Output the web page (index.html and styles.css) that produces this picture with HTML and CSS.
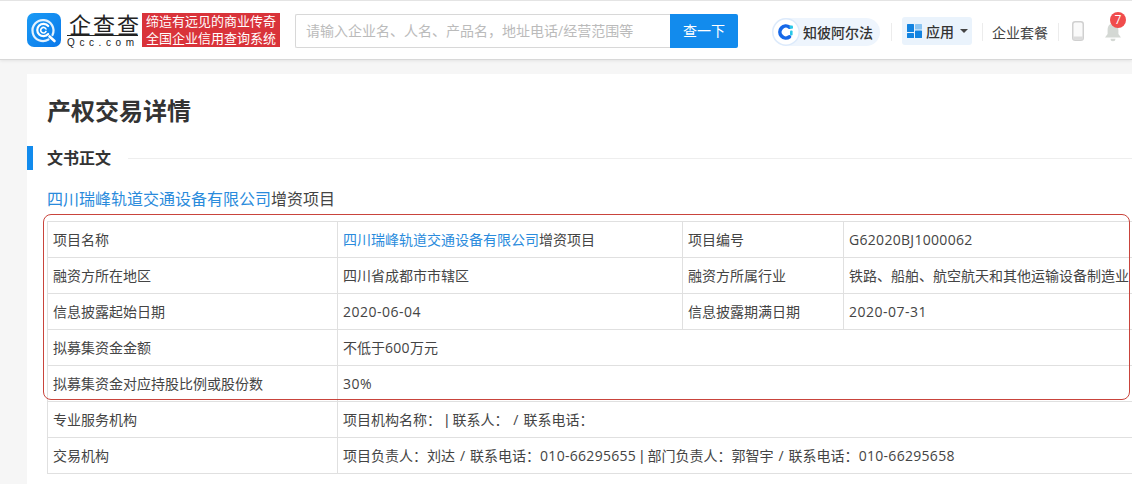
FILE: index.html
```html
<!DOCTYPE html>
<html lang="zh">
<head>
<meta charset="utf-8">
<title>产权交易详情</title>
<link rel="stylesheet" href="styles.css">
</head>
<body>
<header class="header">
  <a class="logo-mark">
    <svg width="34" height="34" viewBox="0 0 34 34">
      <defs><linearGradient id="lg" x1="0" y1="0" x2="1" y2="1"><stop offset="0" stop-color="#1a9bf5"/><stop offset="1" stop-color="#0a78ea"/></linearGradient></defs>
      <rect width="34" height="34" rx="7" fill="url(#lg)"/>
      <path d="M25.5 22 A10.5 10.5 0 1 0 21.5 26.5" fill="none" stroke="#e4f2fe" stroke-width="2.2" stroke-linecap="round"/>
      <path d="M21.2 13 A6.2 6.2 0 1 0 21.2 21" fill="none" stroke="#fff" stroke-width="2.2" stroke-linecap="round"/>
      <path d="M19 16 A2.8 2.8 0 1 0 19 18.4" fill="none" stroke="#fff" stroke-width="1.6" stroke-linecap="round"/>
      <path d="M22.5 23.5 L27.5 28" stroke="#fff" stroke-width="2.6" stroke-linecap="round"/>
    </svg>
  </a>
  <div class="logo-text">
    <div class="logo-cn">企查查</div>
    <div class="logo-en">Qcc.com</div>
  </div>
  <div class="slogan">缔造有远见的商业传奇<br>全国企业信用查询系统</div>
  <div class="search">
    <div class="search-input">请输入企业名、人名、产品名，地址电话/经营范围等</div>
    <div class="search-btn">查一下</div>
  </div>
  <div class="pill">
    <svg class="pill-icon" width="28" height="28" viewBox="0 0 28 28">
      <circle cx="14" cy="14" r="13.2" fill="#fff" stroke="#dceafb" stroke-width="1.4"/>
      <path d="M17.5 9.2 A6 6 0 1 0 17.5 18.8" fill="none" stroke="#1668e8" stroke-width="3.6" stroke-linecap="round"/>
      <rect x="17.6" y="7.4" width="3.4" height="3.4" rx="1" fill="#28c8e8"/>
      <rect x="18" y="12.4" width="2.6" height="5" rx="1" fill="#28c8e8"/>
    </svg>
    <span>知彼阿尔法</span>
  </div>
  <i class="sep sep-a"></i>
  <div class="apps">
    <svg width="15" height="14" viewBox="0 0 15 14">
      <rect x="0" y="0" width="7" height="8" rx="0.5" fill="#1283e0"/>
      <rect x="8" y="0" width="7" height="5.5" rx="0.5" fill="#8cc5f2"/>
      <rect x="0" y="9" width="7" height="5" rx="0.5" fill="#1283e0"/>
      <rect x="8" y="6.5" width="7" height="7.5" rx="0.5" fill="#1283e0"/>
    </svg>
    <span>应用</span>
    <i class="caret"></i>
  </div>
  <i class="sep sep-b"></i>
  <div class="plan">企业套餐</div>
  <i class="sep sep-c"></i>
  <svg class="phone" width="12" height="20" viewBox="0 0 12 20">
    <rect x="0.75" y="0.75" width="10.5" height="18.5" rx="2.5" fill="#fafafa" stroke="#d0d0d0" stroke-width="1.5"/>
    <rect x="1.2" y="15.5" width="9.6" height="3.2" fill="#dcdcdc"/>
  </svg>
  <div class="bell">
    <svg width="18" height="20" viewBox="0 0 18 20">
      <path d="M9 1.5 C5 1.5 3.6 4.5 3.6 8 L3.6 12 L1 15.5 L17 15.5 L14.4 12 L14.4 8 C14.4 4.5 13 1.5 9 1.5Z" fill="#d4d8d4"/>
      <path d="M6.5 16.8 H11.5 A2.5 2.5 0 0 1 6.5 16.8Z" fill="#d4d8d4"/>
    </svg>
    <b class="badge">7</b>
  </div>
</header>

<main class="card">
  <h1 class="title">产权交易详情</h1>
  <div class="section">
    <h2 class="section-name">文书正文</h2>
    <i class="section-line"></i>
  </div>
  <div class="subject"><a class="link">四川瑞峰轨道交通设备有限公司</a>增资项目</div>
  <div class="table-wrap">
    <table class="info">
      <colgroup><col class="c1"><col class="c2"><col class="c3"><col class="c4"></colgroup>
      <tr><td>项目名称</td><td><a class="link">四川瑞峰轨道交通设备有限公司</a>增资项目</td><td>项目编号</td><td><span class="num">G62020BJ1000062</span></td></tr>
      <tr><td>融资方所在地区</td><td>四川省成都市市辖区</td><td>融资方所属行业</td><td>铁路、船舶、航空航天和其他运输设备制造业</td></tr>
      <tr><td>信息披露起始日期</td><td><span class="date">2020-06-04</span></td><td>信息披露期满日期</td><td><span class="date">2020-07-31</span></td></tr>
      <tr><td>拟募集资金金额</td><td colspan="3">不低于<span class="num">600</span>万元</td></tr>
      <tr><td>拟募集资金对应持股比例或股份数</td><td colspan="3"><span class="date">30%</span></td></tr>
      <tr><td>专业服务机构</td><td colspan="3" class="wide-gaps">项目机构名称：<span class="bar"> | </span>联系人： / 联系电话：</td></tr>
      <tr><td>交易机构</td><td colspan="3" class="wide-gaps">项目负责人：刘达 / 联系电话：<span class="num">010-66295655</span><span class="bar"> | </span>部门负责人：郭智宇 / 联系电话：<span class="num">010-66295658</span></td></tr>
    </table>
    <div class="highlight"></div>
  </div>
</main>
</body>
</html>
```

FILE: styles.css
```css
* { box-sizing: border-box; }
html, body { margin: 0; padding: 0; }
body {
  width: 1132px;
  height: 484px;
  overflow: hidden;
  background: #f6f6f6;
  color: #333;
  font-family: "Open Sans", "Noto Sans CJK SC", sans-serif;
  font-size: 14px;
}
.header {
  display: flex;
  align-items: center;
  height: 60px;
  padding: 1px 0 1px 27px;
  background: #fff;
  border-top: 1px solid #e4e4e4;
  border-bottom: 1px solid #d8d8d8;
  box-shadow: 0 1px 3px rgba(0,0,0,.08);
}
.logo-mark { display: block; width: 34px; height: 34px; }
.logo-text { width: 71px; margin-left: 6px; color: #222; text-align: center; }
.logo-cn { font-size: 22px; line-height: 22px; letter-spacing: 2px; padding: 1px 0 0 2px; border-bottom: 1px solid #222; white-space: nowrap; }
.logo-en { font-family: "Liberation Sans", sans-serif; font-size: 10px; line-height: 10px; letter-spacing: 4.6px; margin-top: 2px; white-space: nowrap; }
.slogan {
  width: 138px;
  height: 34px;
  margin-left: 4px;
  background: #d9333a;
  color: #fff;
  font-size: 13px;
  line-height: 17px;
  text-align: center;
  white-space: nowrap;
}
.search { display: flex; width: 443px; height: 34px; margin: 2px 0 0 15px; }
.search-input {
  width: 375px;
  padding-left: 10px;
  border: 1px solid #d8d8d8;
  border-right: 0;
  border-radius: 2px 0 0 2px;
  color: #bbb;
  line-height: 32px;
  white-space: nowrap;
}
.search-btn {
  width: 68px;
  background: #128bed;
  color: #fff;
  line-height: 34px;
  text-align: center;
  border-radius: 0 2px 2px 0;
}
.pill {
  display: flex;
  align-items: center;
  width: 108px;
  height: 28px;
  margin: 4px 0 0 34px;
  background: #eef5fd;
  border-radius: 14px;
  color: #333;
  font-weight: 500;
  white-space: nowrap;
}
.pill span { margin-left: 3px; }
.sep { display: block; width: 1px; height: 18px; margin-top: 4px; background: #ececec; }
.sep-a { margin-left: 11px; }
.apps {
  display: flex;
  align-items: center;
  width: 70px;
  height: 28px;
  margin: 2px 0 0 10px;
  padding-left: 5px;
  background: #eaf3fc;
  border-radius: 3px;
  font-weight: 500;
  white-space: nowrap;
}
.apps span { margin-left: 4px; }
.caret {
  width: 0;
  height: 0;
  margin-left: 6px;
  border-left: 4px solid transparent;
  border-right: 4px solid transparent;
  border-top: 4px solid #444;
}
.sep-b { margin-left: 10px; }
.plan { margin: 4px 0 0 9px; color: #444; white-space: nowrap; }
.sep-c { margin-left: 10px; }
.phone { margin: 2px 0 0 13px; }
.bell { position: relative; width: 18px; height: 20px; margin: 4px 0 0 20px; }
.bell svg { display: block; }
.badge {
  position: absolute;
  top: -10px;
  left: 6px;
  width: 16px;
  height: 16px;
  border-radius: 50%;
  background: #f04c4c;
  color: #fff;
  font-size: 12px;
  font-weight: 400;
  line-height: 16px;
  text-align: center;
}
.card {
  margin: 14px 0 0 27px;
  height: 420px;
  padding-top: 1px;
  background: #fff;
  overflow: hidden;
}
.title {
  margin: 20px 0 0 20px;
  font-size: 24px;
  line-height: 32px;
  font-weight: 700;
  color: #333;
}
.section {
  display: flex;
  align-items: center;
  height: 24px;
  margin-top: 19px;
  border-left: 6px solid #128bed;
}
.section-name { margin: 0 0 0 14px; font-size: 16px; line-height: 24px; font-weight: 700; color: #333; white-space: nowrap; }
.section-line { flex: 1; height: 1px; margin-left: 17px; background: #eee; }
.subject { margin: 17px 0 0 20px; font-size: 16px; line-height: 24px; color: #444; white-space: nowrap; }
.link { color: #2a8bdc; }
.table-wrap { position: relative; margin: 10px 0 0 20px; width: 1085px; }
.info { border-collapse: collapse; table-layout: fixed; width: 1120px; color: #444; }
.c1 { width: 290px; }
.c2 { width: 345px; }
.c3 { width: 161px; }
.c4 { width: 324px; }
.info td {
  height: 36px;
  padding: 0 5px;
  border: 1px solid #e0e0e0;
  line-height: 20px;
  white-space: nowrap;
  overflow: hidden;
}
.num { letter-spacing: .3px; }
.date { letter-spacing: .5px; }
.wide-gaps { word-spacing: 1.3px; }
.bar { font-family: "Liberation Sans", sans-serif; word-spacing: 0; }
.highlight {
  position: absolute;
  left: -4px;
  top: -7px;
  width: 1087px;
  height: 186px;
  border: 1px solid #c9443c;
  border-radius: 8px;
}
```
